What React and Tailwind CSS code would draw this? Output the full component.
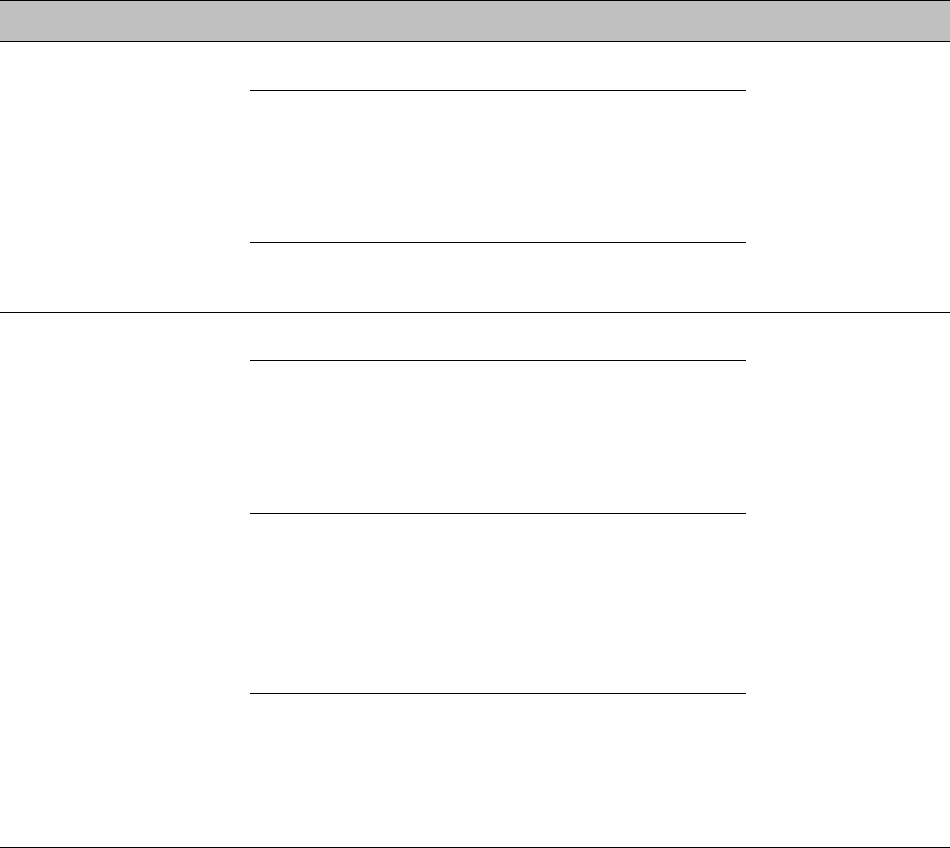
// App.jsx
import React from 'react'

function Block({ height, top = false }) {
  return (
    <div
      className={`ml-[250px] w-[496px] border-b border-black ${top ? 'border-t' : ''}`}
      style={{ height }}
    />
  )
}

export default function App() {
  return (
    <div className="w-[950px] h-[848px] bg-white font-['Liberation_Sans',sans-serif] overflow-hidden">
      {/* header */}
      <div className="h-[42px] bg-[#c0c0c0] border-y border-black" />

      {/* first row */}
      <div className="h-[271px] border-b border-black pt-[48px]">
        <Block height={153} top />
      </div>

      {/* second row */}
      <div className="h-[535px] border-b border-black pt-[47px]">
        <Block height={154} top />
        <Block height={180} />
      </div>
    </div>
  )
}
